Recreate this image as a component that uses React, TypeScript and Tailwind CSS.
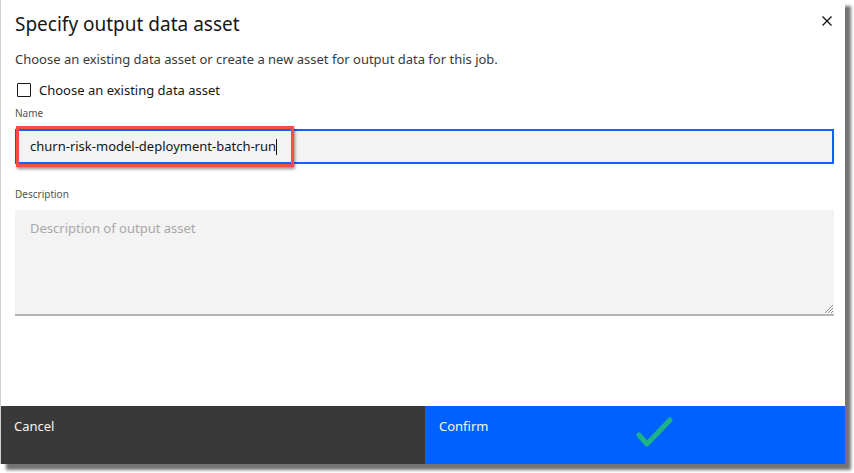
import React from "react"

const font = { fontFamily: '"Noto Sans", "Open Sans", sans-serif' }

const CloseIcon = () => (
    <svg width="12" height="12" viewBox="0 0 12 12" className="text-[#161616]">
        <path d="M1.5 1.5 L10.5 10.5 M10.5 1.5 L1.5 10.5" stroke="currentColor" strokeWidth="1.4" />
    </svg>
)

const App = () => {
    return (
        <div className="w-[854px] h-[473px] bg-white overflow-hidden" style={font}>
            <div className="relative w-[845px] h-[464px] bg-white border-l border-[#d0d0d0] flex flex-col shadow-[6px_6px_3px_rgba(0,0,0,0.55)]">
                {/* header */}
                <div className="flex items-start justify-between pl-[14px] pr-[12px] pt-[11px]">
                    <div className="text-[19px] leading-[26px] text-[#161616]">Specify output data asset</div>
                    <button className="mt-[4px]">
                        <CloseIcon />
                    </button>
                </div>

                <div className="pl-[14px] pr-[11px] pt-[13px]">
                    <p className="text-[13px] leading-[18px] text-[#393939]">
                        Choose an existing data asset or create a new asset for output data for this job.
                    </p>

                    <label className="flex items-center gap-[8px] mt-[13px] pl-[2px]">
                        <span className="w-[14px] h-[14px] border border-[#161616] rounded-[1px] bg-white" />
                        <span className="text-[13px] leading-[18px] text-[#161616]">Choose an existing data asset</span>
                    </label>

                    <div className="text-[10px] leading-[14px] text-[#525252] mt-[7px]">Name</div>
                    <div className="relative mt-[9px]">
                        <div className="h-[35px] bg-[#f3f3f3] border-2 border-[#0f62fe] flex items-center pl-[13px]">
                            <span className="text-[13px] text-[#161616]">churn-risk-model-deployment-batch-run</span>
                            <span className="w-px h-[16px] bg-[#161616]" />
                        </div>
                        <div className="absolute left-[1px] top-[-3px] w-[278px] h-[41px] border-[3px] border-[#f4503f] shadow-[1px_2px_3px_rgba(0,0,0,0.45)]" />
                    </div>

                    <div className="text-[10px] leading-[14px] text-[#525252] mt-[23px]">Description</div>
                    <div className="relative mt-[9px] h-[106px] bg-[#f3f3f3] border-b-2 border-[#b4b4b4] pl-[15px] pt-[5px]">
                        <span className="text-[13px] text-[#a8a8a8]">Description of output asset</span>
                        <svg width="8" height="8" viewBox="0 0 8 8" className="absolute right-[1px] bottom-[1px]">
                            <path d="M8 0 L0 8 M8 3 L3 8 M8 6 L6 8" stroke="#909090" strokeWidth="1" />
                        </svg>
                    </div>
                </div>

                <div className="flex-1" />

                {/* footer */}
                <div className="flex h-[58px]">
                    <button className="w-[424px] bg-[#393939] text-left pl-[13px] pt-[11px] flex items-start">
                        <span className="text-[13px] leading-[18px] text-[#f4f4f4]">Cancel</span>
                    </button>
                    <button className="relative flex-1 bg-[#0062fe] text-left pl-[14px] pt-[11px] flex items-start">
                        <span className="text-[13px] leading-[18px] text-[#f4f4f4]">Confirm</span>
                        <svg width="44" height="36" viewBox="0 0 44 36" className="absolute left-[209px] top-[10px]">
                            <path d="M5 19 L13 28 L36 4" fill="none" stroke="#1db389" strokeWidth="5" strokeLinecap="round" strokeLinejoin="round" />
                        </svg>
                    </button>
                </div>
            </div>
        </div>
    )
}

export default App
